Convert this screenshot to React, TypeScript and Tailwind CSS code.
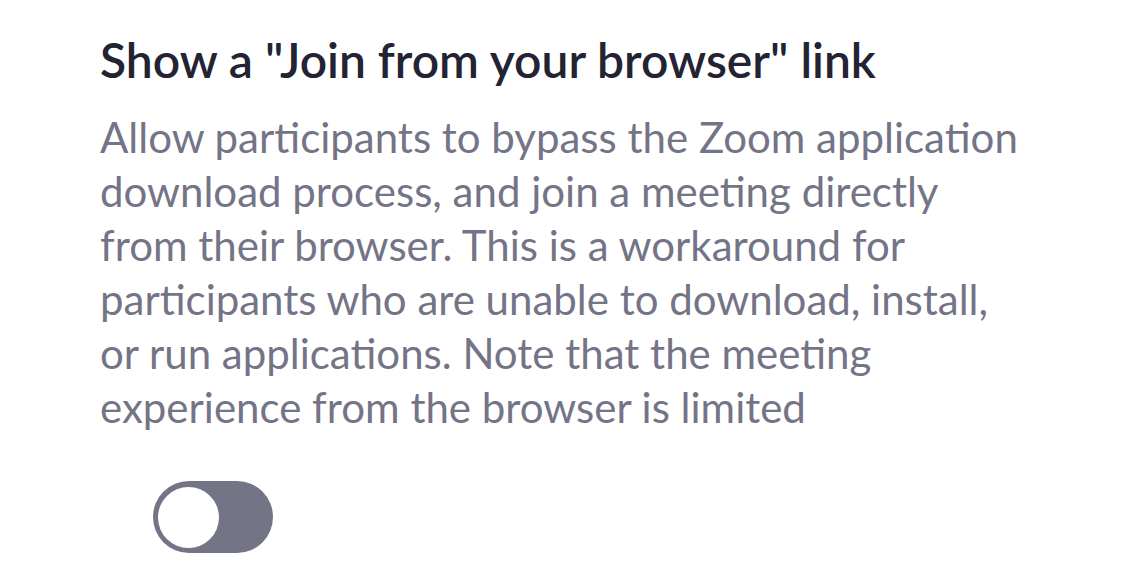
export default function App() {
  return (
    <div className="w-[1125px] h-[581px] bg-white pl-[100px] pt-[32px] overflow-hidden" style={{ fontFamily: "Lato, 'Noto Sans', sans-serif" }}>
      <h1 className="text-[48px] leading-[56px] font-semibold text-[#232333] whitespace-nowrap">Show a "Join from your browser" link</h1>
      <p className="mt-[22px] w-[926px] text-[42px] leading-[54px] text-[#747487]">
        Allow participants to bypass the Zoom application download process, and join a meeting directly from their browser. This is a workaround for participants who are unable to download, install, or run applications. Note that the meeting experience from the browser is limited
      </p>
      <div className="mt-[47px] ml-[53px] w-[120px] h-[72px] rounded-full bg-[#747487] flex items-center pl-[5px]">
        <div className="w-[61px] h-[61px] rounded-full bg-white" />
      </div>
    </div>
  );
}
